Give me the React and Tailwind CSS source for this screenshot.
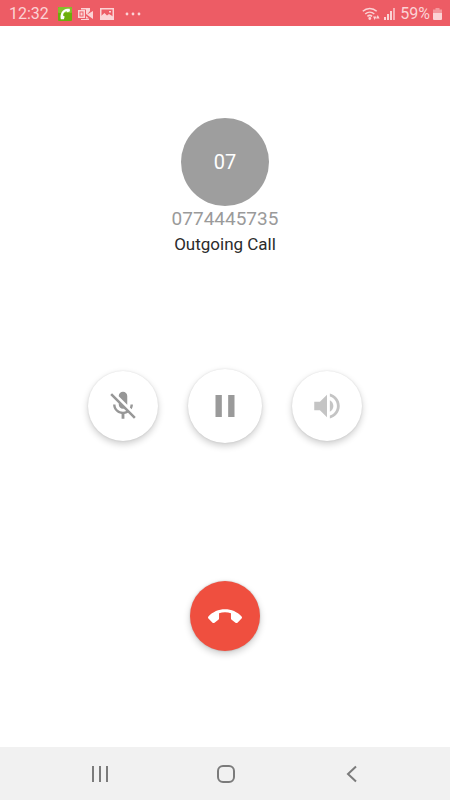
import React, { useState } from "react";

const StatusBar = () => (
  <header className="flex h-[26px] items-center justify-between bg-[#ed5c65] pl-[9px] pr-2 pt-[2px] text-base text-[#fbd3d5]">
    <div className="flex items-center">
      <span className="leading-none">12:32</span>

      <svg className="ml-[9px] h-[14px] w-[14px]" viewBox="0 0 14 14" aria-hidden="true">
        <rect width="14" height="14" rx="1" fill="#6cae0c" />
        <rect width="14" height="6" rx="1" fill="#86bf2c" />
        <path d="M2.800 12.200C1.800 6.500 4.500 2 9.500 1.800h2.200l.3 2.400-2.400 1-1.300-1C6 5 5 6.600 5.200 8.800l1.500.8-.8 2.600z" fill="#fff" />
      </svg>

      {/* Mail */}
      <svg className="ml-[6px] h-[14px] w-[16px]" viewBox="0 0 16 14" aria-hidden="true">
        <path d="M0 3h7v8H0z" fill="currentColor" />
        <rect x="2" y="5" width="3" height="4" fill="none" stroke="#ed5c65" strokeWidth="1" />
        <path d="M3 1h9v3L9 7.500 15 4v8L10 8.500 8 7V2.500H3zM3 12h8v1H3zM8 9l3 2.500H8z" fill="currentColor" />
      </svg>

      <svg className="ml-[6px] h-[14px] w-[14px]" viewBox="0 0 14 14" aria-hidden="true">
        <rect x=".75" y="1.750" width="12.500" height="10.500" fill="none" stroke="currentColor" strokeWidth="1.500" />
        <path d="M1 12V9l3.500-3L7 8.500 9 7l4 2.500V12z" fill="currentColor" />
        <path d="M9 4h2v1.500H9z" fill="currentColor" />
      </svg>

      <svg className="ml-[11px] h-[4px] w-[16px]" viewBox="0 0 16 4" fill="currentColor" aria-hidden="true">
        <circle cx="2" cy="2" r="1.400" />
        <circle cx="8" cy="2" r="1.400" />
        <circle cx="14" cy="2" r="1.400" />
      </svg>
    </div>

    <div className="flex items-center">
      <svg className="h-[14px] w-[18px]" viewBox="0 0 18 14" fill="none" stroke="currentColor" strokeWidth="1.500" aria-hidden="true">
        <path d="M.8 4.300C4.800.4 10.700.4 14.700 4.300" />
        <path d="M3.200 7c2.700-2.500 6.400-2.500 9.100 0" />
        <path d="M5.400 9.400c1.500-1.300 3.200-1.300 4.700 0" />
        <circle cx="7.800" cy="11.500" r=".7" fill="currentColor" />
        <path d="M11 9.500h3.400l-1.700 3.500zM14 11.500h3.600L15.800 8z" fill="currentColor" stroke="none" />
      </svg>

      <svg className="ml-1 h-[14px] w-[12px]" viewBox="0 0 12 14" fill="currentColor" aria-hidden="true">
        <rect x="0" y="10" width="2" height="3" />
        <rect x="3" y="7" width="2" height="6" />
        <rect x="6" y="4" width="2" height="9" />
        <rect x="9" y="1" width="2" height="12" opacity=".7" />
      </svg>

      <span className="ml-1 leading-none">59%</span>

      <svg className="ml-[3px] h-[14px] w-[9px]" viewBox="0 0 9 14" fill="currentColor" aria-hidden="true">
        <path d="M2.500 1h4v1.500H9V6H0V2.500h2.500z" opacity=".5" />
        <path d="M0 6h9v6a1 1 0 0 1-1 1H1a1 1 0 0 1-1-1z" />
      </svg>
    </div>
  </header>
);

const NavBar = () => (
  <nav className="flex h-[53px] items-center justify-between bg-[#f1f1f1] px-[86px] text-[#7b7b7b]">
    <button type="button" aria-label="Recent apps">
      <svg className="h-7 w-7" viewBox="0 0 28 28" stroke="currentColor" strokeWidth="2">
        <path d="M7 6v16M14 6v16M21 6v16" />
      </svg>
    </button>
    <button type="button" aria-label="Home">
      <svg className="h-7 w-7" viewBox="0 0 28 28" fill="none" stroke="currentColor" strokeWidth="2">
        <rect x="7" y="6" width="16" height="16" rx="5" />
      </svg>
    </button>
    <button type="button" aria-label="Back">
      <svg className="h-7 w-7" viewBox="0 0 28 28" fill="none" stroke="currentColor" strokeWidth="2">
        <path d="M20 6.500L12 14l8 7.500" />
      </svg>
    </button>
  </nav>
);

const App = () => {
  const [muted, setMuted] = useState(false);
  const [onHold, setOnHold] = useState(false);
  const [speaker, setSpeaker] = useState(false);

  const round =
    "flex items-center justify-center rounded-full bg-white shadow-[0_3px_7px_rgba(0,0,0,0.2),0_0_2px_rgba(0,0,0,0.1)]";

  return (
    <div className="flex min-h-screen flex-col bg-white font-['Roboto',sans-serif]">
      <StatusBar />

      <main className="flex flex-1 flex-col items-center pt-[92px]">
        {/* Caller */}
        <div className="flex h-[88px] w-[88px] items-center justify-center rounded-full bg-[#9e9e9e] text-xl text-white">
          07
        </div>
        <h1 className="text-[19px] leading-[26px] text-[#9a9a9a]">0774445735</h1>
        <p className="text-[17px] leading-6 text-[#2b2b2b]">Outgoing Call</p>

        {/* Call controls */}
        <div className="mt-[113px] flex items-center gap-[30px]">
          <button
            type="button"
            aria-label="Mute"
            aria-pressed={muted}
            onClick={() => setMuted(!muted)}
            className={`${round} h-[70px] w-[70px] text-[#979797]`}
          >
            <svg className="h-[34px] w-[34px]" viewBox="0 0 24 24" fill="currentColor">
              <path d="M19 11h-1.700c0 .74-.16 1.430-.43 2.050l1.230 1.230c.56-.98.9-2.090.9-3.280zm-4.020.17c0-.06.020-.11.020-.17V5c0-1.660-1.340-3-3-3S9 3.340 9 5v.18l5.980 5.990zM4.270 3L3 4.270l6.010 6.010V11c0 1.660 1.330 3 2.990 3 .22 0 .44-.03.65-.08l1.660 1.660c-.71.33-1.500.52-2.310.52-2.760 0-5.300-2.100-5.300-5.100H5c0 3.410 2.720 6.230 6 6.720V21h2v-3.280c.91-.13 1.770-.45 2.540-.9L19.730 21 21 19.730 4.270 3z" />
            </svg>
          </button>
          <button
            type="button"
            aria-label="Hold"
            aria-pressed={onHold}
            onClick={() => setOnHold(!onHold)}
            className={`${round} h-[74px] w-[74px] text-[#9a9a9a]`}
          >
            <svg className="h-[38px] w-[38px]" viewBox="0 0 24 24" fill="currentColor">
              <path d="M6 19h4V5H6v14zm8-14v14h4V5h-4z" />
            </svg>
          </button>
          <button
            type="button"
            aria-label="Speaker"
            aria-pressed={speaker}
            onClick={() => setSpeaker(!speaker)}
            className={`${round} h-[70px] w-[70px] text-[#c4c4c4]`}
          >
            <svg className="h-[34px] w-[34px]" viewBox="0 0 24 24" fill="currentColor">
              <path d="M3 9v6h4l5 5V4L7 9H3zm13.500 3c0-1.770-1.020-3.290-2.500-4.030v8.050c1.480-.73 2.500-2.250 2.500-4.020zM14 3.230v2.060c2.890.86 5 3.540 5 6.710s-2.110 5.850-5 6.710v2.060c4.010-.91 7-4.490 7-8.770s-2.990-7.860-7-8.770z" />
            </svg>
          </button>
        </div>

        <button
          type="button"
          aria-label="End call"
          className="mt-[138px] mb-8 flex h-[70px] w-[70px] items-center justify-center rounded-full bg-[#ef4f3f] text-white shadow-[0_3px_7px_rgba(0,0,0,0.2),0_0_2px_rgba(0,0,0,0.2)]"
        >
          <svg className="h-[34px] w-[34px]" viewBox="0 0 24 24" fill="currentColor">
            <path d="M12 9.400c-1.500 0-2.900.2-4.200.6v3.800c0 .4-.2.700-.5.900l-2.700 2c-.5.4-1 .4-1.400 0L.3 13.700c-.4-.4-.4-1 0-1.400C3.400 9 7.500 7.200 12 7.200s8.600 1.800 11.700 5.100c.4.400.4 1 0 1.400l-2.900 3c-.4.4-.9.400-1.400 0l-2.700-2c-.3-.2-.5-.5-.5-.9V10c-1.300-.4-2.700-.6-4.200-.6z" />
          </svg>
        </button>
      </main>

      <NavBar />
    </div>
  );
};

export default App;
